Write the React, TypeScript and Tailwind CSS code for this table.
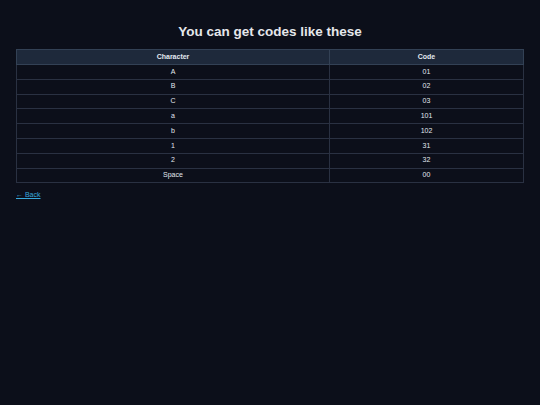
import React from "react";

const rows: [string, string][] = [
  ["A", "01"],
  ["B", "02"],
  ["C", "03"],
  ["a", "101"],
  ["b", "102"],
  ["1", "31"],
  ["2", "32"],
  ["Space", "00"],
];

const App: React.FC = () => {
  return (
    <div className="min-h-screen bg-[#0c0f1a] px-4 pt-[22px] font-['Liberation_Sans',Arial,sans-serif] text-[#e2e8f0]">
      <h1 className="text-center text-[13.5px] font-bold leading-[20px] text-[#e5e7eb]">
        You can get codes like these
      </h1>
      <table className="mt-[7px] w-full border-collapse text-[7px]">
        <thead>
          <tr className="h-[15px] bg-[#1e293b]">
            <th className="w-[313px] border border-[#334155] font-bold">Character</th>
            <th className="border border-[#334155] font-bold">Code</th>
          </tr>
        </thead>
        <tbody>
          {rows.map(([ch, code]) => (
            <tr key={ch} className="h-[14.8px]">
              <td className="border border-[#2a3142] text-center">{ch}</td>
              <td className="border border-[#2a3142] text-center">{code}</td>
            </tr>
          ))}
        </tbody>
      </table>
      <a href="#" className="mt-[7px] block w-fit text-[7px] text-[#38a9dc] underline">
        ← Back
      </a>
    </div>
  );
};

export default App;
